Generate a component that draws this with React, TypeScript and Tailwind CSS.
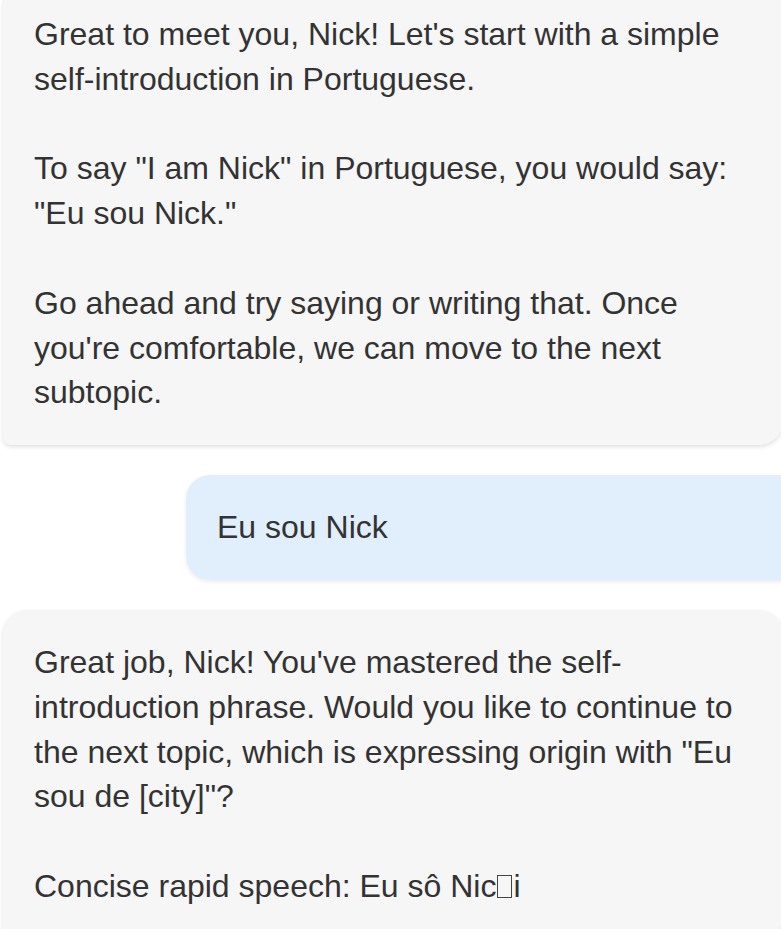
const botFirst = [
  "Great to meet you, Nick! Let's start with a simple",
  "self-introduction in Portuguese.",
  "",
  'To say "I am Nick" in Portuguese, you would say:',
  '"Eu sou Nick."',
  "",
  "Go ahead and try saying or writing that. Once",
  "you're comfortable, we can move to the next",
  "subtopic.",
];

const botSecond = [
  "Great job, Nick! You've mastered the self-",
  "introduction phrase. Would you like to continue to",
  'the next topic, which is expressing origin with "Eu',
  'sou de [city]"?',
  "",
];

function Lines({ lines }: { lines: string[] }) {
  return (
    <>
      {lines.map((line, i) => (
        <div key={i} className="whitespace-nowrap h-[44.8px]">
          {line}
        </div>
      ))}
    </>
  );
}

export default function App() {
  return (
    <div
      className="w-[781px] h-[929px] overflow-hidden bg-white text-[32px] leading-[1.4] text-[#333333]"
      style={{ fontFamily: '"Liberation Sans", Arial, sans-serif' }}
    >
      <div className="flex flex-col gap-[30px] -mt-[18px]">
        <div className="ml-[3px] w-[780px] shrink-0 bg-[#f6f6f6] py-[30px] pl-[31px] pr-[30px] rounded-tl-[24px] rounded-tr-[24px] rounded-br-[24px] rounded-bl-[8px] shadow-[0_2px_4px_rgba(0,0,0,0.12)]">
          <Lines lines={botFirst} />
        </div>

        <div className="ml-[186px] w-[640px] shrink-0 bg-[#e1effc] py-[30px] pl-[31px] pr-[30px] rounded-l-[24px] rounded-br-[8px] shadow-[0_2px_4px_rgba(0,0,0,0.08)]">
          <div className="whitespace-nowrap">Eu sou Nick</div>
        </div>

        <div className="ml-[3px] w-[780px] shrink-0 bg-[#f6f6f6] py-[30px] pl-[31px] pr-[30px] rounded-tl-[24px] rounded-tr-[24px] rounded-br-[24px] rounded-bl-[8px] shadow-[0_2px_4px_rgba(0,0,0,0.12)]">
          <Lines lines={botSecond} />
          <div className="whitespace-nowrap">
            Concise rapid speech: Eu sô Nic
            <span className="inline-block w-[15px] h-[23px] border border-[#444] mx-[1px] align-[-1px]"></span>
            i
          </div>
        </div>
      </div>
    </div>
  );
}
